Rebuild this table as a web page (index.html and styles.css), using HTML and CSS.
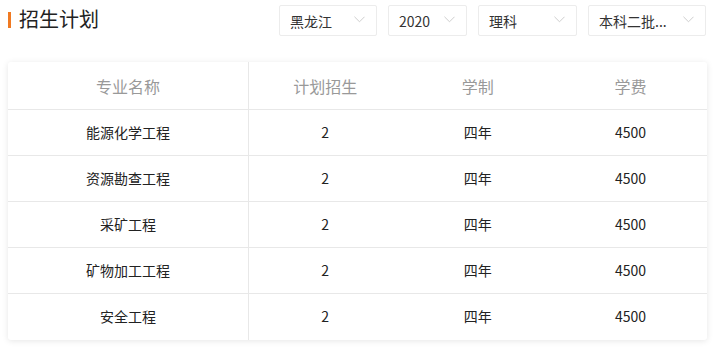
FILE: index.html
```html
<!DOCTYPE html>
<html lang="zh">
<head>
<meta charset="utf-8">
<link rel="stylesheet" href="styles.css">
</head>
<body>
<div class="page">
  <div class="top">
    <div class="title"><span class="bar"></span><span class="title-text">招生计划</span></div>
    <div class="filters">
      <div class="sel w1"><span>黑龙江</span><svg class="chev" viewBox="0 0 12 7" width="11" height="7"><path d="M0.5 0.5 L6 6 L11.5 0.5" fill="none" stroke="#c8c8c8" stroke-width="1"/></svg></div>
      <div class="sel w2"><span>2020</span><svg class="chev" viewBox="0 0 12 7" width="11" height="7"><path d="M0.5 0.5 L6 6 L11.5 0.5" fill="none" stroke="#c8c8c8" stroke-width="1"/></svg></div>
      <div class="sel w3"><span>理科</span><svg class="chev" viewBox="0 0 12 7" width="11" height="7"><path d="M0.5 0.5 L6 6 L11.5 0.5" fill="none" stroke="#c8c8c8" stroke-width="1"/></svg></div>
      <div class="sel w4"><span>本科二批...</span><svg class="chev" viewBox="0 0 12 7" width="11" height="7"><path d="M0.5 0.5 L6 6 L11.5 0.5" fill="none" stroke="#c8c8c8" stroke-width="1"/></svg></div>
    </div>
  </div>
  <div class="card">
    <table class="tbl">
      <thead>
        <tr><th class="c1">专业名称</th><th>计划招生</th><th>学制</th><th>学费</th></tr>
      </thead>
      <tbody>
        <tr><td class="c1">能源化学工程</td><td>2</td><td>四年</td><td>4500</td></tr>
        <tr><td class="c1">资源勘查工程</td><td>2</td><td>四年</td><td>4500</td></tr>
        <tr><td class="c1">采矿工程</td><td>2</td><td>四年</td><td>4500</td></tr>
        <tr><td class="c1">矿物加工工程</td><td>2</td><td>四年</td><td>4500</td></tr>
        <tr><td class="c1">安全工程</td><td>2</td><td>四年</td><td>4500</td></tr>
      </tbody>
    </table>
  </div>
</div>
</body>
</html>
```

FILE: styles.css
```css
html, body {
  margin: 0;
  padding: 0;
  background: #fff;
}
body {
  font-family: "Noto Sans CJK SC", "Noto Sans", sans-serif;
  color: #222;
}
.page {
  width: 717px;
  height: 348px;
  overflow: hidden;
  padding: 5px 10px 0 8px;
  box-sizing: border-box;
}
.top {
  display: flex;
  justify-content: space-between;
  align-items: flex-start;
  height: 57px;
}
.title {
  display: flex;
  align-items: center;
  height: 28px;
}
.bar {
  width: 3px;
  height: 16px;
  background: #f07a22;
  margin-right: 8px;
  margin-top: 1px;
}
.title-text {
  font-size: 20px;
  line-height: 28px;
  color: #222;
}
.filters {
  display: flex;
  gap: 11px;
  margin-right: 1px;
}
.sel {
  height: 31px;
  box-sizing: border-box;
  border: 1px solid #ececec;
  border-radius: 2px;
  display: flex;
  align-items: center;
  justify-content: space-between;
  padding: 0 11px 0 10px;
  font-size: 14px;
  color: #333;
}
.sel span { line-height: 20px; margin-top: 1px; }
.chev { margin-top: -3px; }
.w1 { width: 98px; }
.w2 { width: 79px; }
.w3 { width: 99px; }
.w4 { width: 118px; }
.card {
  width: 699px;
  background: #fff;
  border-radius: 3px;
  box-shadow: 0 1px 6px rgba(0,0,0,0.10);
  overflow: hidden;
}
.tbl {
  width: 100%;
  border-collapse: collapse;
  table-layout: fixed;
}
.tbl th, .tbl td {
  text-align: center;
  padding: 0;
}
.tbl th {
  height: 47px;
  font-weight: normal;
  font-size: 16px;
  color: #999;
  border-bottom: 1px solid #e8e8e8;
}
.tbl td {
  height: 45px;
  padding-bottom: 2px;
  box-sizing: border-box;
  font-size: 14px;
  color: #222;
  border-bottom: 1px solid #e8e8e8;
}
.tbl tbody tr { height: 46px; }
.tbl tbody tr:last-child td { border-bottom: none; }
.tbl .c1 {
  width: 240px;
  border-right: 1px solid #e8e8e8;
}
```
